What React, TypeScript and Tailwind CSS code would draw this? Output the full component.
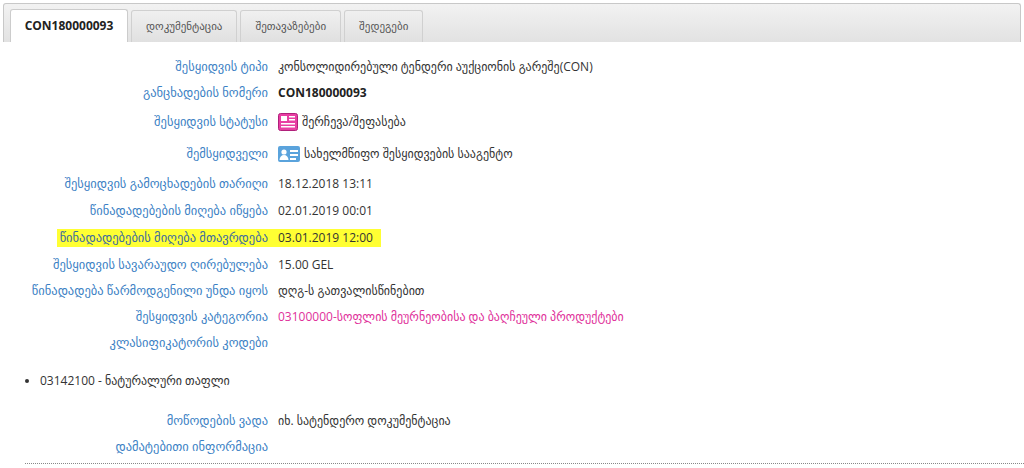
import React from 'react';

const rows: { label: string; value: React.ReactNode; h: string; hl?: boolean }[] = [
  { label: 'შესყიდვის ტიპი', value: 'კონსოლიდირებული ტენდერი აუქციონის გარეშე(CON)', h: 'h-[26px]' },
  { label: 'განცხადების ნომერი', value: <b className="text-[#222]">CON180000093</b>, h: 'h-[26px]' },
  { label: 'შესყიდვის სტატუსი', value: 'status', h: 'h-[32px]' },
  { label: 'შემსყიდველი', value: 'buyer', h: 'h-[32px]' },
  { label: 'შესყიდვის გამოცხადების თარიღი', value: '18.12.2018 13:11', h: 'h-[28px]' },
  { label: 'წინადადებების მიღება იწყება', value: '02.01.2019 00:01', h: 'h-[26px]' },
  { label: 'წინადადებების მიღება მთავრდება', value: '03.01.2019 12:00', h: 'h-[28px]', hl: true },
  { label: 'შესყიდვის სავარაუდო ღირებულება', value: '15.00 GEL', h: 'h-[26px]' },
  { label: 'წინადადება წარმოდგენილი უნდა იყოს', value: 'დღგ-ს გათვალისწინებით', h: 'h-[26px]' },
  { label: 'შესყიდვის კატეგორია', value: <span className="text-[#e0309a]">03100000-სოფლის მეურნეობისა და ბაღჩეული პროდუქტები</span>, h: 'h-[26px]' },
  { label: 'კლასიფიკატორის კოდები', value: '', h: 'h-[26px]' },
];

function StatusIcon() {
  return (
    <svg width="20" height="18" viewBox="0 0 20 18" className="mr-1">
      <rect x="0.5" y="0.5" width="19" height="17" rx="2" fill="#e83ea3" stroke="#b0207a" />
      <rect x="3" y="3" width="6" height="5" fill="#fff" />
      <rect x="11" y="3" width="6" height="1.5" fill="#fff" />
      <rect x="11" y="6" width="6" height="1.5" fill="#fff" />
      <rect x="3" y="10" width="14" height="1.5" fill="#fff" />
      <rect x="3" y="13" width="14" height="1.5" fill="#fff" />
    </svg>
  );
}

function BuyerIcon() {
  return (
    <svg width="22" height="18" viewBox="0 0 22 18" className="mr-1">
      <rect x="0" y="1" width="22" height="16" rx="2" fill="#5aa3dc" />
      <circle cx="6" cy="7" r="2.6" fill="#fff" />
      <path d="M1.5 15c0-3 2-5 4.5-5s4.5 2 4.5 5z" fill="#fff" />
      <rect x="12" y="5" width="8" height="2" fill="#fff" />
      <rect x="12" y="9" width="8" height="2" fill="#fff" />
      <rect x="12" y="13" width="6" height="2" fill="#fff" />
    </svg>
  );
}

export default function App() {
  const tabs = ['დოკუმენტაცია', 'შეთავაზებები', 'შედეგები'];
  return (
    <div className="w-[1024px] h-[468px] overflow-hidden bg-white text-[12px] text-[#333]" style={{ fontFamily: '"Open Sans", "DejaVu Sans", sans-serif' }}>
      <div className="mx-[3px] mt-[3px] h-[39px] flex items-end gap-[3px] pl-[6px] border border-[#c8c8c8] border-b-0 rounded-t-[3px] bg-gradient-to-b from-[#f2f2f2] to-[#e2e2e2]">
        <div className="h-[33px] w-[118px] flex items-center justify-center bg-white border border-[#ccc] border-b-0 rounded-t-[3px] font-bold text-[#222]">CON180000093</div>
        {tabs.map((t) => (
          <div key={t} className="h-[32px] px-[14px] flex items-center bg-gradient-to-b from-[#f0f0f0] to-[#e0e0e0] border border-[#d0d0d0] border-b-0 rounded-t-[3px] text-[#555] text-[11px]">{t}</div>
        ))}
      </div>
      <div className="pt-[12px]">
        {rows.map((r) => (
          <div key={r.label} className={`flex items-center ${r.h}`}>
            <div className="w-[268px] flex justify-end shrink-0">
              <span className={`text-right whitespace-nowrap text-[12.5px] ${r.hl ? 'bg-[#ffff33] text-[#3b6aa0] pl-[3px]' : 'text-[#3b7fc4]'}`}>{r.label}</span>
            </div>
            <div className={`whitespace-nowrap flex items-center ${r.hl ? 'bg-[#ffff33] pl-[10px] pr-[8px]' : 'pl-[10px]'}`}>
              {r.value === 'status' ? (<><StatusIcon />შერჩევა/შეფასება</>) : r.value === 'buyer' ? (<><BuyerIcon />სახელმწიფო შესყიდვების სააგენტო</>) : r.value}
            </div>
          </div>
        ))}
        <ul className="list-disc pl-[40px] mt-[16px] mb-[18px]">
          <li>03142100 - ნატურალური თაფლი</li>
        </ul>
        {[['მოწოდების ვადა', 'იხ. სატენდერო დოკუმენტაცია'], ['დამატებითი ინფორმაცია', '']].map(([l, v]) => (
          <div key={l} className="flex items-center h-[26px]">
            <div className="w-[268px] text-right text-[12.5px] text-[#3b7fc4] whitespace-nowrap">{l}</div>
            <div className="pl-[10px]">{v}</div>
          </div>
        ))}
        <div className="ml-[25px] mt-[3px] border-b border-dotted border-[#888]" />
      </div>
    </div>
  );
}
